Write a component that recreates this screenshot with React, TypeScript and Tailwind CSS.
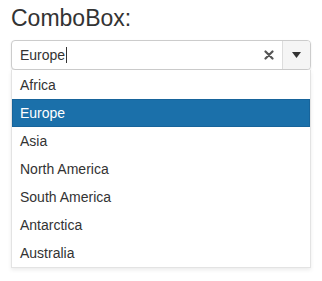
import React from "react";

const regions = ["Africa", "Europe", "Asia", "North America", "South America", "Antarctica", "Australia"];

export default function App() {
  const selected = "Europe";

  return (
    <div className="w-[322px] h-[281px] bg-white font-['Liberation_Sans',Arial,sans-serif] text-[#333]">
      <div className="pl-[11px] pt-[3px]">
        <h2 className="text-[23px] leading-[31px] text-[#333]">ComboBox:</h2>

        <div className="mt-[6px] w-[300px]">
          {/* input */}
          <div className="flex h-[30px] items-stretch rounded-[4px] border border-[#ccc] bg-white shadow-[0_1px_2px_rgba(0,0,0,0.1)]">
            <div className="flex flex-1 items-center pl-[8px] text-[14px]">
              Europe<span className="ml-px inline-block h-[16px] w-px bg-[#333]" />
            </div>
            <div className="flex w-[26px] items-center justify-center">
              <svg width="10" height="10" viewBox="0 0 10 10">
                <path d="M1.5 1.5 L8.5 8.5 M8.5 1.5 L1.5 8.5" stroke="#555" strokeWidth="2.2" strokeLinecap="round" />
              </svg>
            </div>
            <div className="flex w-[28px] items-center justify-center rounded-r-[3px] border-l border-[#ddd] bg-[#f5f5f5]">
              <svg width="9" height="6" viewBox="0 0 9 6">
                <path d="M0 0 H9 L4.5 6 Z" fill="#333" />
              </svg>
            </div>
          </div>

          {/* list */}
          <ul className="border border-t-0 border-[#e3e3e3] bg-white pt-px shadow-[0_2px_4px_rgba(0,0,0,0.08)]">
            {regions.map((r) => (
              <li
                key={r}
                className={
                  r === selected
                    ? "flex h-[28px] items-center border border-[#17649b] bg-[#1b70aa] pl-[7px] text-[14px] text-white"
                    : "flex h-[28px] items-center pl-[8px] text-[14px] text-[#333]"
                }
              >
                {r}
              </li>
            ))}
          </ul>
        </div>
      </div>
    </div>
  );
}
